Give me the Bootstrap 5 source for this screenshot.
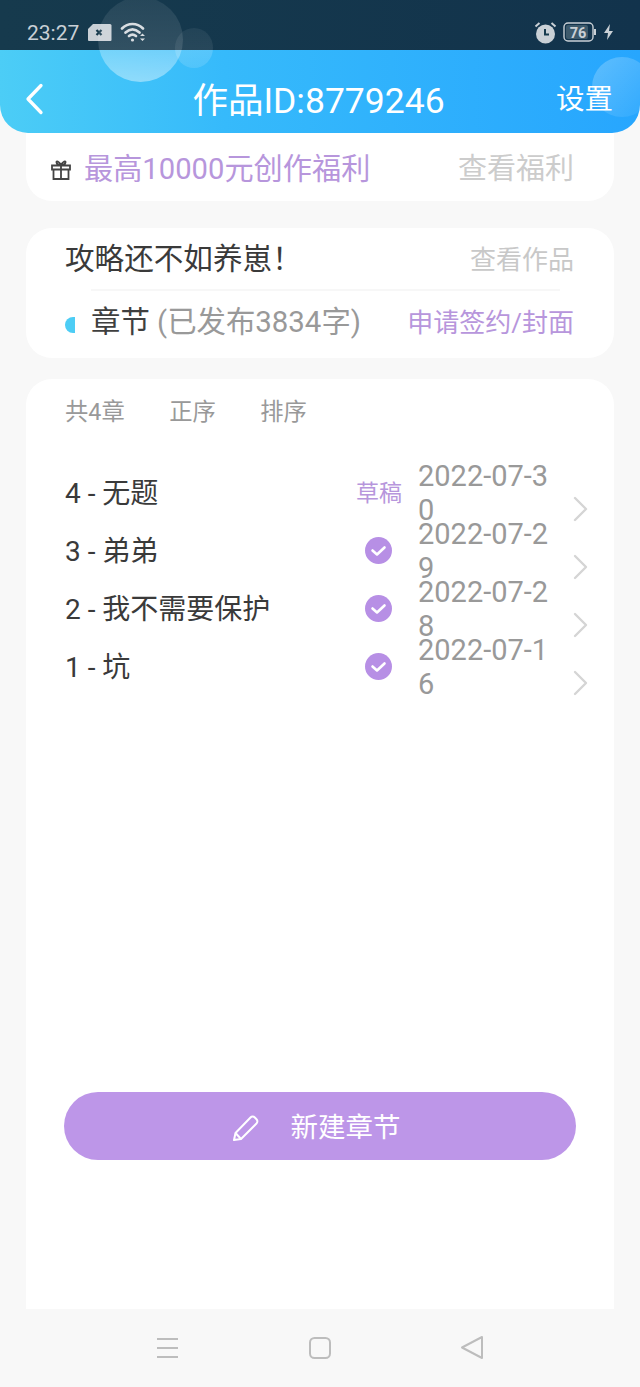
<!DOCTYPE html>
<html lang="zh">
<head>
<meta charset="utf-8">
<link href="https://cdn.jsdelivr.net/npm/bootstrap@5.3.0/dist/css/bootstrap.min.css" rel="stylesheet">
<style>
html,body{margin:0;height:1387px;overflow:hidden}
body{background:#f8f8f8;font-family:Roboto,"Noto Sans CJK SC",sans-serif;color:#333;width:640px}
.screen{height:1387px;position:relative;overflow:hidden}
.status{height:50px;background:linear-gradient(90deg,#163a4d,#12334c);color:#c9d0d6;font-size:21px;padding:14px 26px 0 27px}
.status-time{line-height:1;padding-top:2px}
.head{height:83px;background:linear-gradient(90deg,#4ccdf6 0%,#36bafb 35%,#27a6fe 100%);border-radius:0 0 28px 28px;color:#fff;padding:15px 27px 0 24px;position:relative;z-index:1}
.head-side{flex:1 1 0}
.head-title{font-size:35.500px;line-height:1;font-weight:400;white-space:nowrap;padding-top:5px}
.head-set{font-size:28.500px;line-height:1;padding-top:3px}
.bub{position:absolute;border-radius:50%}
.bub-a{left:98px;top:-3px;width:85px;height:85px;z-index:2;background:linear-gradient(180deg,rgba(255,255,255,.07) 0,rgba(255,255,255,.12) 62%,rgba(255,255,255,.27) 62.500%,rgba(255,255,255,.42) 100%)}
.bub-b{left:175px;top:28px;width:38px;height:40px;z-index:2;background:linear-gradient(180deg,rgba(255,255,255,.06) 0,rgba(255,255,255,.08) 55%,rgba(255,255,255,.16) 55.500%,rgba(255,255,255,.12) 100%)}
.bub-c{left:592px;top:57px;width:60px;height:60px;background:linear-gradient(135deg,rgba(255,255,255,.25),rgba(255,255,255,.03));z-index:2}
.cardish{background:#fff;margin:0 26px}
.c-gift{height:68px;border-radius:0 0 26px 26px;padding:5px 40px 0 24px}
.c-work{height:130px;border-radius:26px;margin-top:27px;padding:0 40px 0 39px}
.c-list{height:930px;border-radius:26px 26px 0 0;margin-top:21px;padding:0 0 0 39px;position:relative}
.t-purple{color:#b796dc}
.gift-text{font-size:29.200px;line-height:1;margin-left:12px}
.t-mute{color:#ccc;font-size:29px;line-height:1}
.work-top{height:61px;padding-top:3px}
.work-rule{height:2px;background:#f7f7f7;margin:0 14px 0 26px}
.work-name{font-size:29.600px;line-height:1;color:#3a3a3a}
.t-mute2{color:#c8c8c8;font-size:26px;line-height:1}
.work-bot{height:63px}
.dot{width:10px;height:16px;background:#4dcdf5;border-radius:8px 0 0 8px;margin:4px 16px 0 0}
.ch{font-size:29.400px;line-height:1;color:#3f3f3f}
.ch-sub{color:#999}
.apply{font-size:26px;line-height:1}
.tabs{height:64px;font-size:23.300px;color:#999;line-height:1;gap:44.500px;padding-top:4px}
.rows{margin-top:21px;padding-right:25px}
.rw{height:58px}
.rw-name{font-size:28px;color:#3a3a3a;line-height:1;flex:1 1 auto;padding-top:1px}
.rw-st{width:46px;font-size:23px;line-height:1;flex:none}
.rw-check{margin:-2px 0 0 9px}
.rw-date{width:135px;margin-left:16px;font-size:29px;line-height:34px;color:#999;word-break:break-all;height:68px;flex:none}
.rw-arrow{margin-left:18px;width:18px;flex:none;margin-top:32px}
.new-btn{position:absolute;left:38px;top:713px;width:512px;height:68px;border-radius:34px;background:#bd96e8;color:#fff;border:0;font-size:27.500px;line-height:1;gap:31px;padding:3px 8px 0 0}
.nav-bar{height:78px;background:#f8f8f8}
</style>
</head>
<body>
<div class="screen">
  <div class="bub bub-a"></div><div class="bub bub-b"></div><div class="bub bub-c"></div>
  <div class="status d-flex align-items-center justify-content-between">
    <div class="d-flex align-items-center gap-2">
      <span class="status-time">23:27</span>
      <svg width="25" height="19" viewBox="0 0 25 19"><path d="M6 1h17a1.500 1.500 0 0 1 1.500 1.500V17a1 1 0 0 1-1 1H2a1 1 0 0 1-1-1V6z" fill="#c9d0d6"/><path d="M9.500 7l5 5m0-5l-5 5" stroke="#163a4d" stroke-width="2.200"/></svg>
      <svg width="26" height="22" viewBox="0 0 26 22" fill="none" stroke="#d5dadf" stroke-width="2.700" stroke-linecap="round"><path d="M2 7.500C8 1.500 17 1.500 23 7.500"/><path d="M5.500 11.500C10 7.500 15 7.500 19.500 11.500"/><path d="M9 15c2.500-2 4.500-2 7 0"/><circle cx="12.500" cy="19" r="1.600" fill="#d5dadf" stroke="none"/><path d="M20 15l2.500-2.500L25 15zM20 17.500l2.500 2.500 2.500-2.500z" fill="#d5dadf" stroke="none"/></svg>
    </div>
    <div class="d-flex align-items-center" style="gap:6px">
      <svg width="23" height="23" viewBox="0 0 23 23"><circle cx="11.500" cy="13" r="9.500" fill="#c9d0d6"/><path d="M11 8v5.500h4" fill="none" stroke="#163a4d" stroke-width="2"/><path d="M1.500 5.500L5.500 2M21.500 5.500L17.500 2" stroke="#c9d0d6" stroke-width="2"/></svg>
      <svg width="34" height="20" viewBox="0 0 34 20"><rect x="1" y="1" width="29" height="18" rx="4" fill="none" stroke="#c9d0d6" stroke-width="1.400"/><rect x="3" y="3" width="22" height="14" rx="2" fill="#3d5a6c"/><rect x="31" y="7" width="2" height="6" fill="#c9d0d6"/><text x="15" y="15.500" font-family="Roboto" font-size="14.500" font-weight="700" text-anchor="middle" fill="#c9d0d6">76</text></svg>
      <svg width="11" height="16" viewBox="0 0 11 16"><path d="M7 0L1 9h4l-1 7 6-9H6z" fill="#c9d0d6"/></svg>
    </div>
  </div>
  <div class="head d-flex align-items-center">
    <div class="head-side d-flex">
      <svg width="22" height="32" viewBox="0 0 22 32" fill="none" stroke="#fff" stroke-width="3.300" stroke-linecap="round" stroke-linejoin="round"><path d="M17 2.500L4 16l13 13.500"/></svg>
    </div>
    <div class="head-title">作品ID:8779246</div>
    <div class="head-side d-flex justify-content-end"><div class="head-set">设置</div></div>
  </div>
  <div class="cardish c-gift d-flex align-items-center">
    <svg width="22" height="22" viewBox="0 0 22 22" fill="none" stroke="#444" stroke-width="1.800"><path d="M2 6.500h18v4H2zM3.500 10.500V20h15v-9.500M11 6.500V20M11 6C9 2 6 1.500 6.500 3.500S9 6 11 6zM11 6c2-4 5-4.500 4.500-2.500S13 6 11 6z"/></svg>
    <span class="gift-text t-purple flex-grow-1">最高10000元创作福利</span>
    <span class="t-mute">查看福利</span>
  </div>
  <div class="cardish c-work">
    <div class="work-top d-flex align-items-center justify-content-between">
      <span class="work-name">攻略还不如养崽！</span>
      <span class="t-mute2">查看作品</span>
    </div>
    <div class="work-rule"></div>
    <div class="work-bot d-flex align-items-center justify-content-between">
      <div class="d-flex align-items-center">
        <span class="dot"></span>
        <span class="ch">章节 <span class="ch-sub">(已发布3834字)</span></span>
      </div>
      <span class="apply t-purple">申请签约/封面</span>
    </div>
  </div>
  <div class="cardish c-list">
    <div class="tabs d-flex align-items-center">
      <span>共4章</span><span>正序</span><span>排序</span>
    </div>
    <div class="rows">
      <div class="rw d-flex align-items-center">
        <div class="rw-name">4 - 无题</div>
        <div class="rw-st t-purple">草稿</div>
        <div class="rw-date">2022-07-30</div>
        <svg class="rw-arrow" width="18" height="26" viewBox="0 0 18 26" fill="none" stroke="#d5d5d5" stroke-width="2.400" stroke-linecap="round" stroke-linejoin="round"><path d="M4 2l11 11L4 24"/></svg>
      </div>
      <div class="rw d-flex align-items-center">
        <div class="rw-name">3 - 弟弟</div>
        <div class="rw-st d-flex"><svg class="rw-check" width="27" height="27" viewBox="0 0 27 27"><circle cx="13.500" cy="13.500" r="13.500" fill="#b78fe5"/><path d="M7.500 13.500l4.500 4 7.500-7" fill="none" stroke="#fff" stroke-width="2.600" stroke-linecap="round" stroke-linejoin="round"/></svg></div>
        <div class="rw-date">2022-07-29</div>
        <svg class="rw-arrow" width="18" height="26" viewBox="0 0 18 26" fill="none" stroke="#d5d5d5" stroke-width="2.400" stroke-linecap="round" stroke-linejoin="round"><path d="M4 2l11 11L4 24"/></svg>
      </div>
      <div class="rw d-flex align-items-center">
        <div class="rw-name">2 - 我不需要保护</div>
        <div class="rw-st d-flex"><svg class="rw-check" width="27" height="27" viewBox="0 0 27 27"><circle cx="13.500" cy="13.500" r="13.500" fill="#b78fe5"/><path d="M7.500 13.500l4.500 4 7.500-7" fill="none" stroke="#fff" stroke-width="2.600" stroke-linecap="round" stroke-linejoin="round"/></svg></div>
        <div class="rw-date">2022-07-28</div>
        <svg class="rw-arrow" width="18" height="26" viewBox="0 0 18 26" fill="none" stroke="#d5d5d5" stroke-width="2.400" stroke-linecap="round" stroke-linejoin="round"><path d="M4 2l11 11L4 24"/></svg>
      </div>
      <div class="rw d-flex align-items-center">
        <div class="rw-name">1 - 坑</div>
        <div class="rw-st d-flex"><svg class="rw-check" width="27" height="27" viewBox="0 0 27 27"><circle cx="13.500" cy="13.500" r="13.500" fill="#b78fe5"/><path d="M7.500 13.500l4.500 4 7.500-7" fill="none" stroke="#fff" stroke-width="2.600" stroke-linecap="round" stroke-linejoin="round"/></svg></div>
        <div class="rw-date">2022-07-16</div>
        <svg class="rw-arrow" width="18" height="26" viewBox="0 0 18 26" fill="none" stroke="#d5d5d5" stroke-width="2.400" stroke-linecap="round" stroke-linejoin="round"><path d="M4 2l11 11L4 24"/></svg>
      </div>
    </div>
    <button class="new-btn btn d-flex align-items-center justify-content-center">
      <svg width="28" height="28" viewBox="0 0 28 28" fill="none" stroke="#fff" stroke-width="2" stroke-linejoin="round"><path d="M2 26l1.500-7L18.500 3.500a3 3 0 0 1 4.300 0l1.700 1.700a3 3 0 0 1 0 4.300L9 25z"/><path d="M3.500 19L9 25"/></svg>
      <span>新建章节</span>
    </button>
  </div>
  <div class="nav-bar d-flex align-items-center position-relative">
    <svg class="position-absolute" style="left:156px;top:28px" width="23" height="22" viewBox="0 0 23 22" stroke="#bdbdbd" stroke-width="1.800"><path d="M1 2h21M1 11h21M1 20h21"/></svg>
    <svg class="position-absolute" style="left:309px;top:28px" width="22" height="22" viewBox="0 0 22 22" fill="none" stroke="#bdbdbd" stroke-width="2"><rect x="1" y="1" width="20" height="20" rx="4.500"/></svg>
    <svg class="position-absolute" style="left:460px;top:26px" width="24" height="25" viewBox="0 0 24 25" fill="none" stroke="#bdbdbd" stroke-width="2" stroke-linejoin="round"><path d="M22 2v21L2 12.500z"/></svg>
  </div>
</div>
</body>
</html>
